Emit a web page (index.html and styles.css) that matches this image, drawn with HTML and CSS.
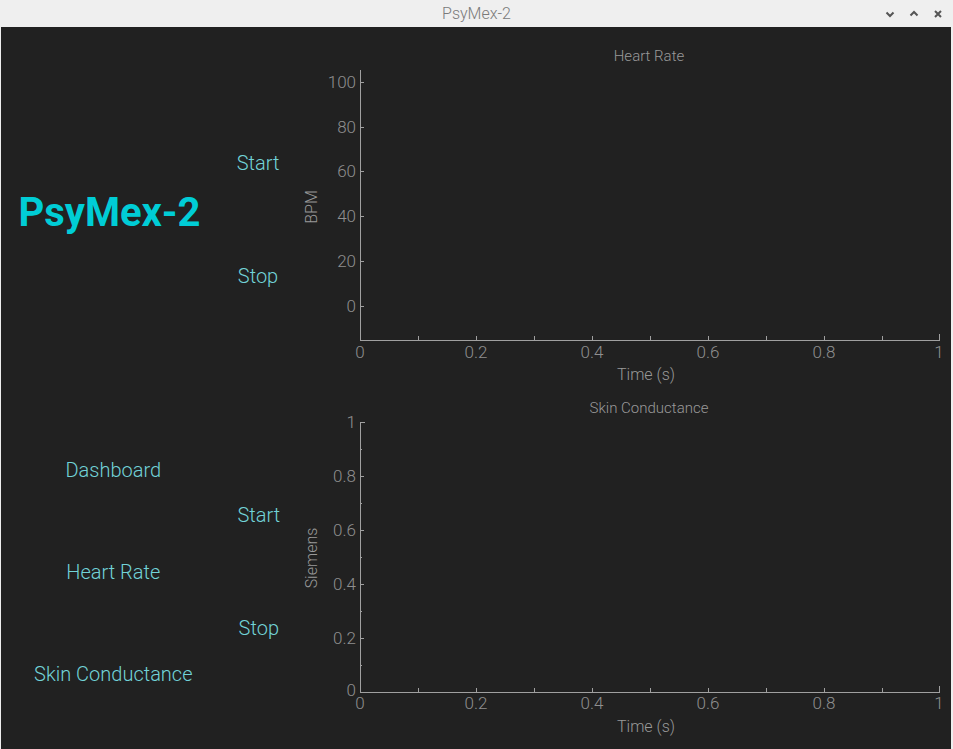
FILE: index.html
```html
<!DOCTYPE html>
<html>
<head>
<meta charset="utf-8">
<link rel="stylesheet" href="styles.css">
</head>
<body>
<div class="titlebar">
  <span class="wtitle">PsyMex-2</span>
  <div class="wctrls">
    <svg class="wbtn" viewBox="0 0 10 10"><path d="M1.5 3.5 L5 7 L8.5 3.5" /></svg>
    <svg class="wbtn" viewBox="0 0 10 10"><path d="M1.5 6.5 L5 3 L8.5 6.5" /></svg>
    <svg class="wbtn" viewBox="0 0 10 10"><path d="M2 2 L8 8 M8 2 L2 8" /></svg>
  </div>
</div>
<div class="window">
  <div class="row row-top">
    <div class="left brand-col"><h1 class="brand">PsyMex-2</h1></div>
    <div class="btns btns-top">
      <div class="btn">Start</div>
      <div class="btn">Stop</div>
    </div>
    <svg class="chart" viewBox="0 0 651 361" width="651" height="361">
      <text class="ctitle" x="349" y="34" text-anchor="middle">Heart Rate</text>
      <g class="axis">
        <line x1="60.5" y1="43" x2="60.5" y2="313.5"/>
        <line x1="60" y1="313.5" x2="639.5" y2="313.5"/>
        <line x1="60" y1="55.5" x2="64" y2="55.5"/>
        <line x1="60" y1="100.5" x2="64" y2="100.5"/>
        <line x1="60" y1="144.5" x2="64" y2="144.5"/>
        <line x1="60" y1="189.5" x2="64" y2="189.5"/>
        <line x1="60" y1="234.5" x2="64" y2="234.5"/>
        <line x1="60" y1="279.5" x2="64" y2="279.5"/>
        <line x1="118.5" y1="313" x2="118.5" y2="309"/>
        <line x1="176.5" y1="313" x2="176.5" y2="309"/>
        <line x1="234.5" y1="313" x2="234.5" y2="309"/>
        <line x1="292.5" y1="313" x2="292.5" y2="309"/>
        <line x1="350.5" y1="313" x2="350.5" y2="309"/>
        <line x1="408.5" y1="313" x2="408.5" y2="309"/>
        <line x1="466.5" y1="313" x2="466.5" y2="309"/>
        <line x1="524.5" y1="313" x2="524.5" y2="309"/>
        <line x1="582.5" y1="313" x2="582.5" y2="309"/>
        <line x1="639.5" y1="314" x2="639.5" y2="307"/>
      </g>
      <g class="ylab" text-anchor="end">
        <text x="56" y="61">100</text>
        <text x="56" y="106">80</text>
        <text x="56" y="150">60</text>
        <text x="56" y="195">40</text>
        <text x="56" y="240">20</text>
        <text x="56" y="285">0</text>
      </g>
      <g class="xlab" text-anchor="middle">
        <text x="60" y="331">0</text>
        <text x="176" y="331">0.2</text>
        <text x="292" y="331">0.4</text>
        <text x="408" y="331">0.6</text>
        <text x="524" y="331">0.8</text>
        <text x="639" y="331">1</text>
      </g>
      <text class="alabel" x="346" y="353" text-anchor="middle">Time (s)</text>
      <text class="alabel" x="0" y="0" text-anchor="middle" transform="translate(17 180) rotate(-90)">BPM</text>
    </svg>
  </div>
  <div class="row row-bottom">
    <nav class="left nav">
      <div class="nav-item">Dashboard</div>
      <div class="nav-item">Heart Rate</div>
      <div class="nav-item">Skin Conductance</div>
    </nav>
    <div class="btns btns-bottom">
      <div class="btn">Start</div>
      <div class="btn">Stop</div>
    </div>
    <svg class="chart" viewBox="0 0 651 361" width="651" height="361">
      <text class="ctitle" x="349" y="25" text-anchor="middle">Skin Conductance</text>
      <g class="axis">
        <line x1="60.5" y1="34" x2="60.5" y2="304.5"/>
        <line x1="60" y1="304.5" x2="639.5" y2="304.5"/>
        <line x1="60" y1="34.5" x2="65" y2="34.5"/>
        <line x1="60" y1="61.5" x2="62" y2="61.5"/>
        <line x1="60" y1="88.5" x2="64" y2="88.5"/>
        <line x1="60" y1="115.5" x2="62" y2="115.5"/>
        <line x1="60" y1="142.5" x2="64" y2="142.5"/>
        <line x1="60" y1="169.5" x2="62" y2="169.5"/>
        <line x1="60" y1="196.5" x2="64" y2="196.5"/>
        <line x1="60" y1="223.5" x2="62" y2="223.5"/>
        <line x1="60" y1="250.5" x2="64" y2="250.5"/>
        <line x1="60" y1="277.5" x2="62" y2="277.5"/>
        <line x1="118.5" y1="304" x2="118.5" y2="300"/>
        <line x1="176.5" y1="304" x2="176.5" y2="300"/>
        <line x1="234.5" y1="304" x2="234.5" y2="300"/>
        <line x1="292.5" y1="304" x2="292.5" y2="300"/>
        <line x1="350.5" y1="304" x2="350.5" y2="300"/>
        <line x1="408.5" y1="304" x2="408.5" y2="300"/>
        <line x1="466.5" y1="304" x2="466.5" y2="300"/>
        <line x1="524.5" y1="304" x2="524.5" y2="300"/>
        <line x1="582.5" y1="304" x2="582.5" y2="300"/>
        <line x1="639.5" y1="305" x2="639.5" y2="298"/>
      </g>
      <g class="ylab" text-anchor="end">
        <text x="56" y="40">1</text>
        <text x="56" y="94">0.8</text>
        <text x="56" y="148">0.6</text>
        <text x="56" y="202">0.4</text>
        <text x="56" y="256">0.2</text>
        <text x="56" y="308">0</text>
      </g>
      <g class="xlab" text-anchor="middle">
        <text x="60" y="321">0</text>
        <text x="176" y="321">0.2</text>
        <text x="292" y="321">0.4</text>
        <text x="408" y="321">0.6</text>
        <text x="524" y="321">0.8</text>
        <text x="639" y="321">1</text>
      </g>
      <text class="alabel" x="346" y="344" text-anchor="middle">Time (s)</text>
      <text class="alabel" x="0" y="0" text-anchor="middle" transform="translate(17 170) rotate(-90)">Siemens</text>
    </svg>
  </div>
</div>
</body>
</html>
```

FILE: styles.css
```css
html, body {
  margin: 0;
  padding: 0;
  background: #eeeeee;
  width: 953px;
  height: 749px;
  overflow: hidden;
  font-family: Roboto, "Liberation Sans", sans-serif;
}

.titlebar {
  height: 27px;
  background: #efefef;
  position: relative;
  display: flex;
  align-items: center;
  justify-content: center;
}

.wtitle {
  font-size: 16px;
  font-weight: 300;
  color: #7a7a7a;
  line-height: 27px;
}

.wctrls {
  position: absolute;
  right: 10px;
  top: 0;
  height: 27px;
  display: flex;
  align-items: center;
  gap: 14px;
}

.wbtn {
  width: 10px;
  height: 10px;
  fill: none;
  stroke: #555555;
  stroke-width: 2;
}

.window {
  margin-left: 1px;
  width: 950px;
  height: 722px;
  background: #212121;
  display: flex;
  flex-direction: column;
}

.row {
  height: 361px;
  display: flex;
}

.left {
  width: 217px;
}

.brand-col {
  display: flex;
  align-items: flex-start;
  justify-content: center;
}

.brand {
  margin: 162px 0 0 0;
  font-size: 40px;
  font-weight: 700;
  line-height: 48px;
  color: #00cdd6;
}

.btns {
  width: 82px;
  padding-right: 2px;
  box-sizing: border-box;
  display: flex;
  flex-direction: column;
  align-items: center;
  gap: 73px;
}

.btns-top { padding-top: 116px; }
.btns-bottom { padding-top: 107px; }

.btn {
  height: 40px;
  line-height: 40px;
  font-size: 20px;
  font-weight: 300;
  color: #72d3d8;
}

.nav {
  display: flex;
  flex-direction: column;
  align-items: center;
  padding-top: 31px;
  padding-left: 6px;
}

.nav-item {
  height: 102px;
  line-height: 102px;
  font-size: 20px;
  font-weight: 300;
  color: #72d3d8;
  white-space: nowrap;
}

.chart {
  display: block;
  flex: none;
}

.axis line {
  stroke: #a0a0a0;
  stroke-width: 1;
}

.ctitle {
  font-size: 15px;
  font-weight: 300;
  fill: #999999;
}

.ylab text, .xlab text {
  font-size: 17px;
  font-weight: 300;
  fill: #8f8f8f;
}

.alabel {
  font-size: 16px;
  font-weight: 300;
  fill: #999999;
}
```
